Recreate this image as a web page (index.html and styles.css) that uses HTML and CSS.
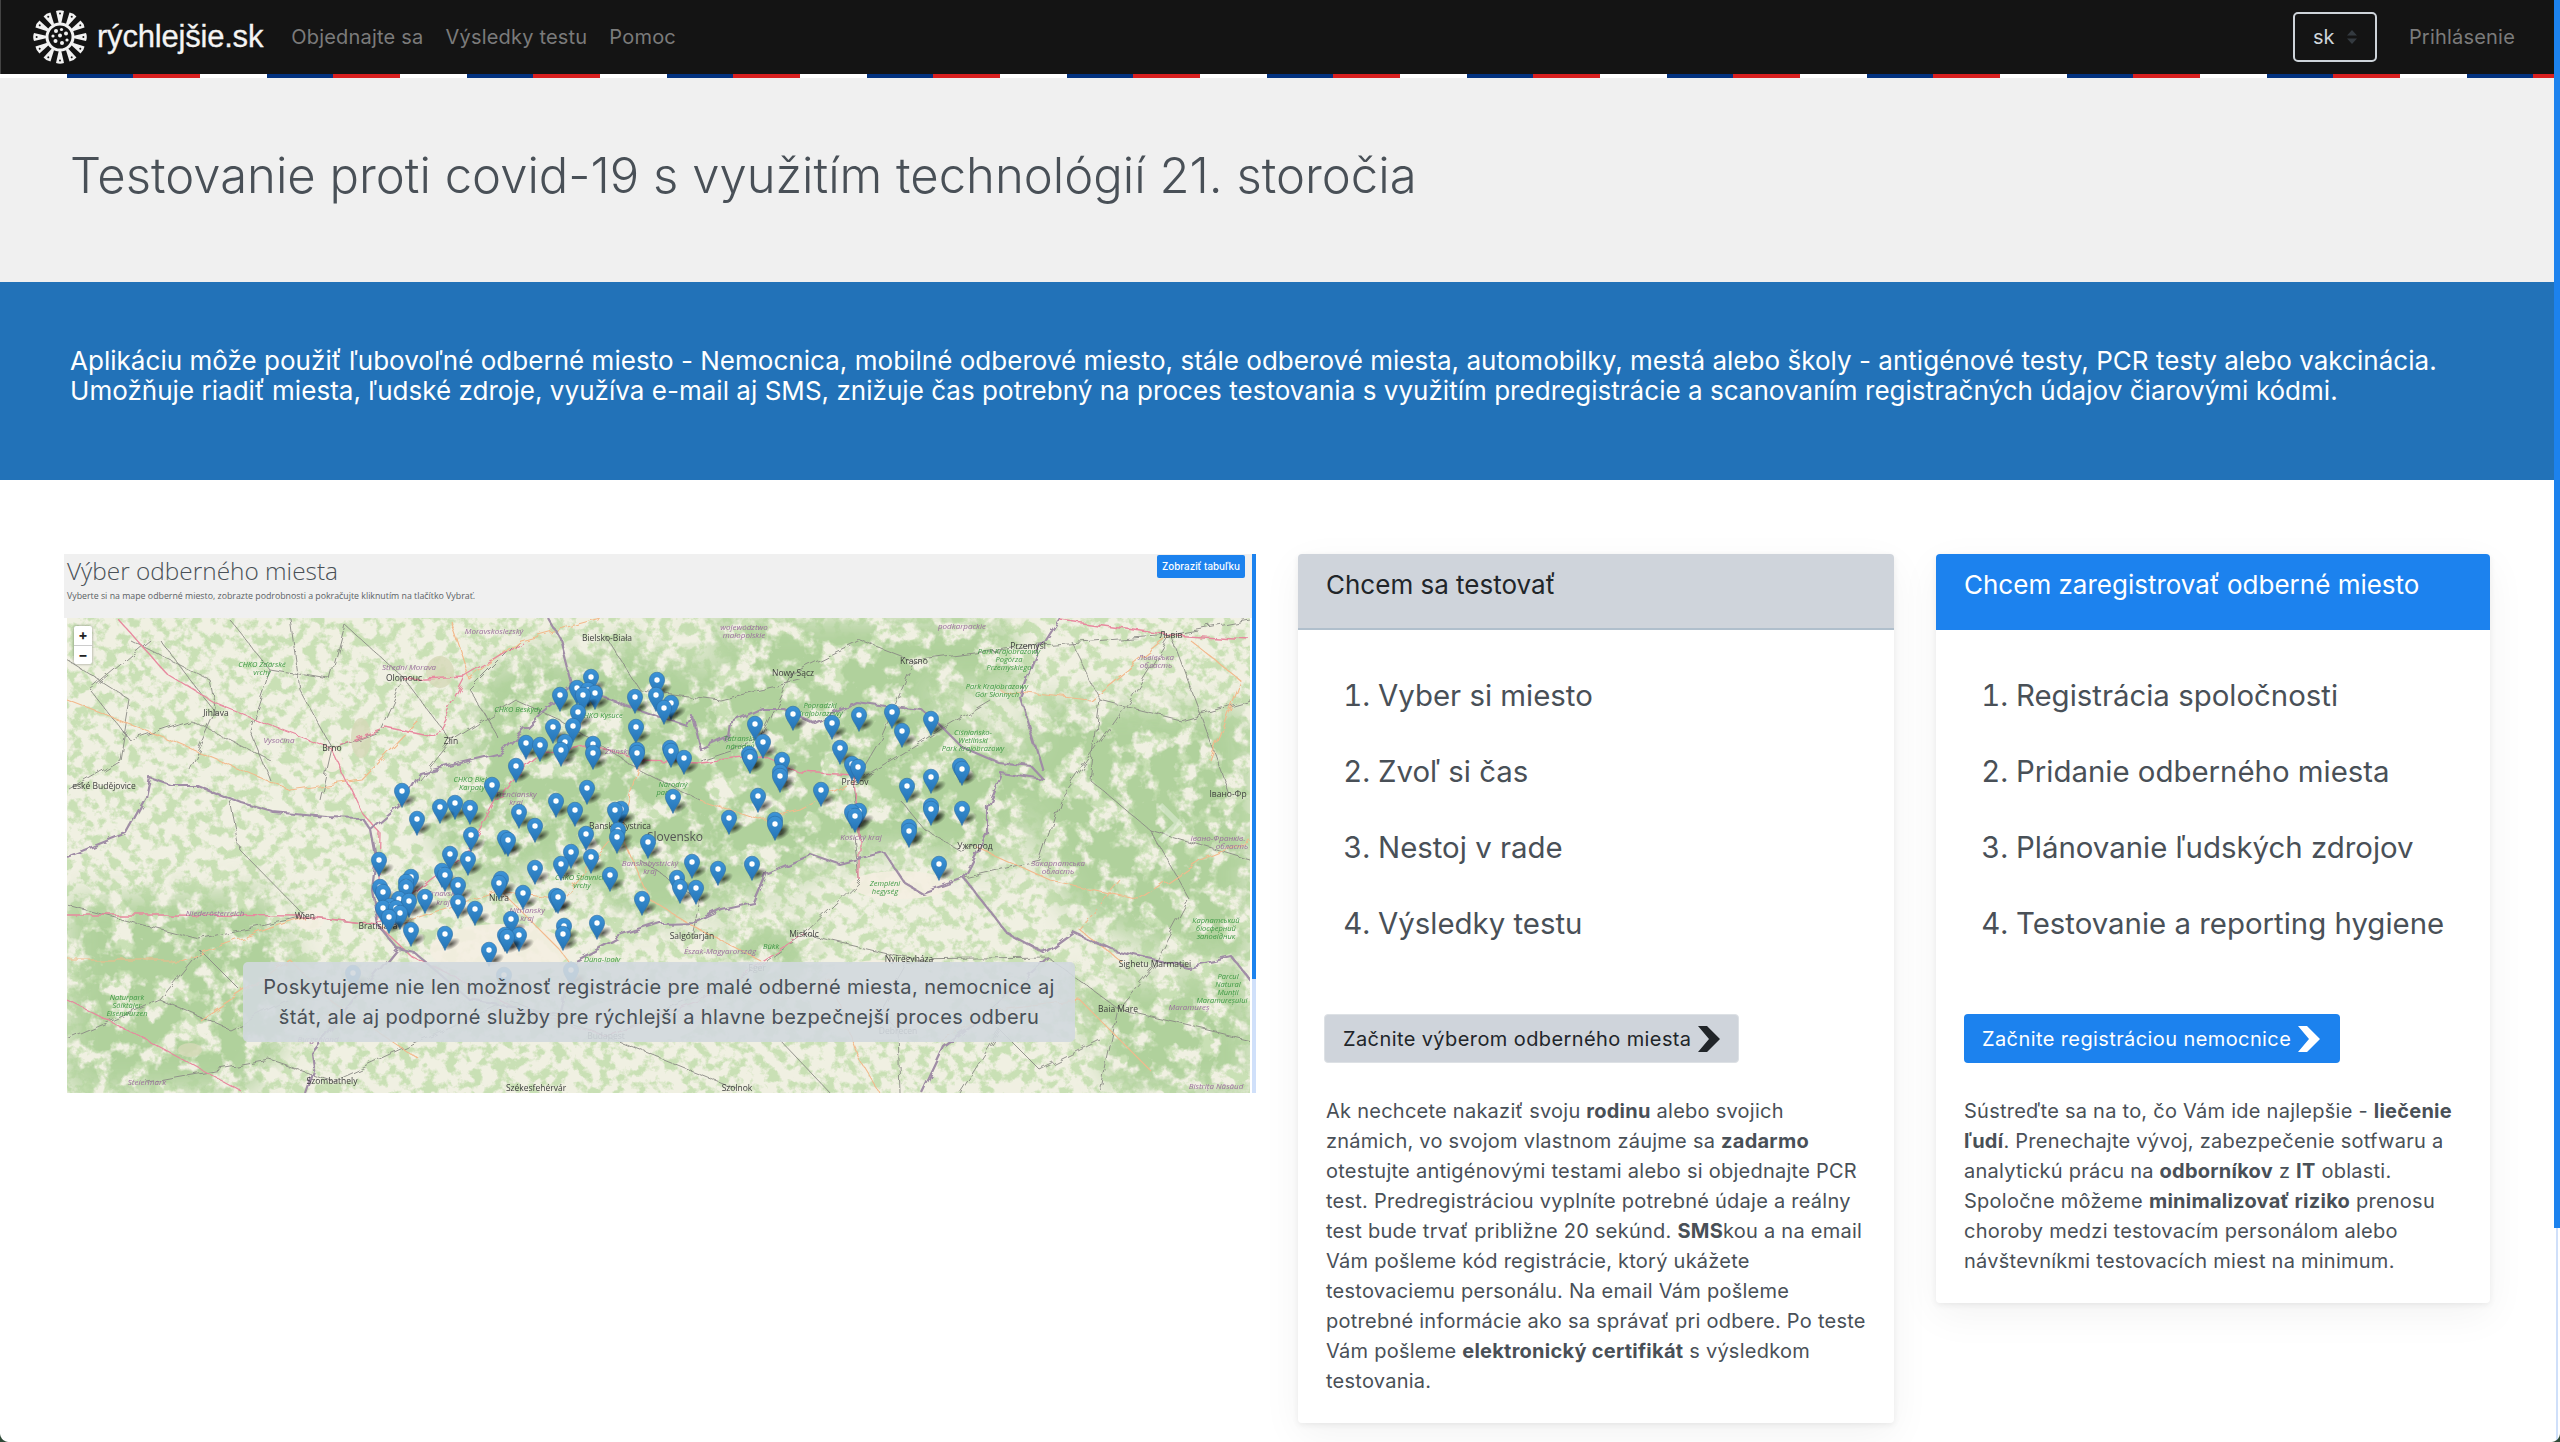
FILE: index.html
```html
<!DOCTYPE html>
<html lang="sk">
<head>
    <meta charset="UTF-8">
    <meta name="viewport" content="width=device-width, initial-scale=1.0">
    <title>rýchlejšie.sk</title>
    <link rel="stylesheet" href="styles.css">
</head>
<body>
<div class="window">
<div class="page">
    <nav class="navbar">
        <svg class="logo" viewBox="-27 -27 54 54">
            <defs>
                <g id="spike"><path d="M-1.3 -14 L1.3 -14 L4 -26 Q0 -27.6 -4 -26 Z"/><circle cy="-23.4" r="1" fill="#141414"/></g>
            </defs>
            <g fill="#f2f2f2">
                <use href="#spike"/>
                <use href="#spike" transform="rotate(30)"/>
                <use href="#spike" transform="rotate(60)"/>
                <use href="#spike" transform="rotate(90)"/>
                <use href="#spike" transform="rotate(120)"/>
                <use href="#spike" transform="rotate(150)"/>
                <use href="#spike" transform="rotate(180)"/>
                <use href="#spike" transform="rotate(210)"/>
                <use href="#spike" transform="rotate(240)"/>
                <use href="#spike" transform="rotate(270)"/>
                <use href="#spike" transform="rotate(300)"/>
                <use href="#spike" transform="rotate(330)"/>
                <circle r="13" fill="#141414" stroke="#f2f2f2" stroke-width="3"/>
                <circle cx="-4" cy="-6" r="2"/>
                <circle cx="1.5" cy="-7.5" r="1.6"/>
                <circle cx="6" cy="-3.5" r="2"/>
                <circle cx="-7" cy="-1" r="1.6"/>
                <circle cx="0" cy="-1.5" r="2"/>
                <circle cx="-4.5" cy="4" r="2"/>
                <circle cx="2" cy="6" r="2"/>
                <circle cx="7" cy="3" r="1.6"/>
            </g>
        </svg>
        <a class="brand" href="#">rýchlejšie.sk</a>
        <a class="nav-link" href="#">Objednajte sa</a>
        <a class="nav-link" href="#">Výsledky testu</a>
        <a class="nav-link" href="#">Pomoc</a>
        <div class="lang">
            <span>sk</span>
            <svg class="lang-arrows" width="10" height="14" viewBox="0 0 10 14"><path d="M5 0 L10 5.5 H0 Z M5 14 L0 8.5 H10 Z" fill="#343a40"/></svg>
        </div>
        <a class="nav-link login" href="#">Prihlásenie</a>
    </nav>
    <div class="stripe"></div>

    <header class="hero">
        <h1>Testovanie proti covid-19 s využitím technológií 21. storočia</h1>
    </header>

    <section class="band">
        <p>Aplikáciu môže použiť ľubovoľné odberné miesto - Nemocnica, mobilné odberové miesto, stále odberové miesta, automobilky, mestá alebo školy - antigénové testy, PCR testy alebo vakcinácia. Umožňuje riadiť miesta, ľudské zdroje, využíva e-mail aj SMS, znižuje čas potrebný na proces testovania s využitím predregistrácie a scanovaním registračných údajov čiarovými kódmi.</p>
    </section>

    <main class="content">
        <section class="preview">
            <div class="preview-main">
                <div class="preview-head">
                    <div>
                        <h3>Výber odberného miesta</h3>
                        <p>Vyberte si na mape odberné miesto, zobrazte podrobnosti a pokračujte kliknutím na tlačítko Vybrať.</p>
                    </div>
                    <a class="table-btn" href="#">Zobraziť tabuľku</a>
                </div>
                <div class="map">
                    <svg class="map-svg" viewBox="67 618 1183 475" preserveAspectRatio="none">
                        <defs>
                            <filter id="mottle" x="0" y="0" width="100%" height="100%" color-interpolation-filters="sRGB">
                                <feTurbulence type="fractalNoise" baseFrequency=".085" numOctaves="4" seed="7"/>
                                <feColorMatrix values="0 0 0 0 .79  0 0 0 0 .88  0 0 0 0 .71  6 0 0 0 -2.75"/>
                            </filter>
                            <filter id="forest" x="0" y="0" width="100%" height="100%" color-interpolation-filters="sRGB">
                                <feTurbulence type="fractalNoise" baseFrequency=".045" numOctaves="4" seed="12"/>
                                <feColorMatrix values="0 0 0 0 .69  0 0 0 0 .82  0 0 0 0 .61  7 0 0 0 -2.7"/>
                            </filter>
                            <filter id="wiggle" x="-5%" y="-5%" width="110%" height="110%">
                                <feTurbulence type="fractalNoise" baseFrequency=".06" numOctaves="3" seed="3"/>
                                <feDisplacementMap in="SourceGraphic" scale="9"/>
                            </filter>
                            <filter id="soft"><feGaussianBlur stdDeviation="14"/></filter>
                            <mask id="hills">
                                <g fill="#fff" filter="url(#soft)">
                                    <path d="M490 700 L620 640 L760 680 L900 680 L1050 760 L1000 870 L880 850 L770 890 L640 930 L560 860 L470 890 L430 830 Z"/>
                                    <path d="M1030 700 L1250 710 L1250 970 L1180 960 L1070 910 L1030 830 Z"/>
                                    <path d="M67 900 L270 890 L310 1000 L250 1093 L67 1093 Z"/>
                                    <path d="M690 618 L1010 618 L1020 690 L750 690 Z"/>
                                    <path d="M1060 985 L1250 975 L1250 1093 L1120 1093 Z"/>
                                    <path d="M725 925 L805 920 L815 975 L735 985 Z"/>
                                    <path d="M470 680 L560 640 L570 720 L480 760 Z"/>
                                </g>
                            </mask>
                            <radialGradient id="shade">
                                <stop offset="0" stop-color="#000" stop-opacity=".65"/>
                                <stop offset=".55" stop-color="#000" stop-opacity=".3"/>
                                <stop offset="1" stop-color="#000" stop-opacity="0"/>
                            </radialGradient>
                            <linearGradient id="pinfill" x1="0" y1="0" x2="0" y2="1">
                                <stop offset="0" stop-color="#3d94d8"/>
                                <stop offset="1" stop-color="#2473b4"/>
                            </linearGradient>
                            <g id="p">
                                <ellipse cx="6" cy="10" rx="10" ry="5" fill="url(#shade)" transform="rotate(-28 6 10)"/>
                                <path d="M0 16.5 C-1.4 11.5 -7.6 5.5 -7.6 -.2 A7.6 7.6 0 1 1 7.6 -.2 C7.6 5.5 1.4 11.5 0 16.5 Z" fill="url(#pinfill)" stroke="#2a6ba3" stroke-width=".6"/>
                                <circle r="2.7" fill="#fff"/>
                            </g>
                        </defs>

                        <rect x="67" y="618" width="1183" height="475" fill="#f0f0e2"/>
                        <rect x="67" y="618" width="1183" height="475" filter="url(#mottle)"/>
                        <g mask="url(#hills)">
                            <rect x="67" y="618" width="1183" height="475" filter="url(#forest)"/>
                        </g>

                        <g fill="#f5efe2" opacity=".9">
                            <ellipse cx="332" cy="760" rx="10" ry="12"/>
                            <ellipse cx="310" cy="920" rx="14" ry="10"/>
                            <ellipse cx="640" cy="1020" rx="60" ry="22"/>
                            <ellipse cx="900" cy="885" rx="50" ry="14"/>
                            <ellipse cx="500" cy="950" rx="70" ry="26"/>
                            <ellipse cx="880" cy="1000" rx="70" ry="40"/>
                        </g>
                        <g fill="#d6d9b8" opacity=".8">
                            <ellipse cx="361" cy="738" rx="10" ry="20"/>
                            <ellipse cx="440" cy="672" rx="14" ry="16"/>
                            <ellipse cx="190" cy="1050" rx="12" ry="7"/>
                        </g>

                        <g class="rds" filter="url(#wiggle)">
                            <g class="rd-minor">
                                <path d="M67 660 L130 700 L120 760 L70 790"/>
                                <path d="M130 640 L210 680 L216 713 L190 770"/>
                                <path d="M216 713 L160 640"/>
                                <path d="M290 618 L300 690 L332 748 L320 800"/>
                                <path d="M345 625 L404 678 L380 730 L332 748"/>
                                <path d="M404 678 L451 741 L420 780"/>
                                <path d="M451 741 L516 700 L560 720 L640 770 L700 800"/>
                                <path d="M607 638 L640 690 L720 700 L800 680"/>
                                <path d="M793 673 L860 640 L914 661 L1028 646 L1171 635 L1250 620"/>
                                <path d="M914 661 L880 740 L855 782 L860 837"/>
                                <path d="M793 673 L760 740 L700 760"/>
                                <path d="M1171 635 L1130 700 L1060 800 L1040 860 L964 878"/>
                                <path d="M1171 635 L1230 794"/>
                                <path d="M855 782 L940 730 L990 700"/>
                                <path d="M67 905 L200 940 L305 916 L378 925"/>
                                <path d="M305 916 L240 850 L230 800"/>
                                <path d="M332 1081 L420 1040 L510 1000 L606 1036"/>
                                <path d="M332 1081 L270 1060 L147 1082"/>
                                <path d="M606 1036 L737 1089"/>
                                <path d="M606 1036 L757 968 L804 934 L909 959 L1048 957 L1118 1009 L1250 1040"/>
                                <path d="M909 959 L880 1010 L898 1031 L900 1093"/>
                                <path d="M804 934 L860 880 L855 837"/>
                                <path d="M692 936 L700 900 L640 860"/>
                                <path d="M1155 964 L1118 1009 L1100 1093"/>
                                <path d="M900 800 L925 830 L960 850 L975 846"/>
                                <path d="M150 640 L90 690 L130 740 L190 720 L270 760"/>
                                <path d="M230 620 L270 670 L330 680 L345 625"/>
                                <path d="M270 670 L250 730 L270 780"/>
                                <path d="M520 640 L470 690 L500 740"/>
                                <path d="M1070 640 L1100 700 L1180 720 L1250 700"/>
                                <path d="M1100 700 L1090 780 L1150 830 L1250 860"/>
                                <path d="M1150 830 L1190 900 L1155 964"/>
                                <path d="M67 1040 L160 1000 L230 1030 L290 1000"/>
                                <path d="M160 1000 L200 950 L240 990"/>
                                <path d="M960 1093 L1000 1030 L1040 1070 L1100 1040"/>
                                <path d="M780 1040 L830 1093"/>
                            </g>
                            <g class="rd-sec">
                                <path d="M67 700 L170 740 L290 790 L362 780 L420 720"/>
                                <path d="M450 620 L470 680 L520 640 L600 618"/>
                                <path d="M640 760 L620 830 L650 900 L700 930 L760 960"/>
                                <path d="M500 890 L560 900 L620 830"/>
                                <path d="M67 960 L180 960 L305 916"/>
                                <path d="M380 930 L500 890 L560 950 L590 990"/>
                                <path d="M1000 690 L1090 700 L1171 635"/>
                                <path d="M975 846 L1050 880 L1140 900 L1200 860 L1250 840"/>
                                <path d="M200 1020 L290 960 L330 1000 L420 1060"/>
                                <path d="M940 1040 L1000 1010 L1080 1000 L1150 1070"/>
                                <path d="M780 1000 L830 980 L860 1060 L880 1093"/>
                                <path d="M855 782 L800 810 L760 820 L700 800"/>
                                <path d="M1190 640 L1240 680 L1210 760"/>
                                <path d="M1120 880 L1080 930 L1120 960"/>
                            </g>
                            <g class="rd-main">
                                <path d="M119 620 L166 673 L215 703 L264 723 L331 748 L385 727 L434 737 L465 677 L523 643"/>
                                <path d="M331 748 L362 813 L380 833 L378 925"/>
                                <path d="M378 925 L430 880 L470 850 L497 800 L516 775 L540 755 L590 745 L640 760 L700 762 L760 755 L800 772 L855 775 L860 820 L860 880"/>
                                <path d="M305 916 L378 925 L410 955 L520 1010 L606 1036"/>
                                <path d="M67 915 L160 915 L305 916"/>
                                <path d="M605 1036 L700 1000 L804 934"/>
                                <path d="M1060 620 L1171 635 L1250 640"/>
                                <path d="M405 680 L465 677"/>
                                <path d="M240 1090 L147 1040 L67 1000"/>
                            </g>
                            <g class="rd-border">
                                <path d="M67 857 L126 833 L146 797 L150 778 L170 785 L197 785 L242 803 L273 812 L327 817 L362 818 L371 830 L376 857 L372 890 L378 925 L397 948 L414 952 L470 1000 L560 1015 L575 960 L617 937 L660 923 L697 922 L722 910 L754 903 L767 873 L811 855 L840 865 L885 853 L905 883 L922 893 L964 878 L970 867 L987 833 L987 807 L1001 773 L1044 780 L1032 767 L999 763 L962 747 L938 723 L922 710 L893 707 L856 702 L815 723 L783 708 L762 708 L730 723 L728 737 L701 750 L693 717 L688 727 L648 713 L612 700 L572 687 L541 713 L501 753 L420 773 L403 803 L371 830"/>
                                <path d="M572 687 L559 637 L548 618"/>
                                <path d="M1042 770 L1020 697 L1038 653 L1060 618"/>
                                <path d="M964 878 L1007 933 L1044 953 L1073 932 L1113 950 L1187 967 L1232 957 L1250 980"/>
                                <path d="M1048 957 L980 1020 L944 1047 L922 1093"/>
                                <path d="M397 948 L312 1053 L314 1067 L305 1093"/>
                            </g>
                        </g>
                        <polyline points="1160,805 1178,823 1160,841" fill="none" stroke="#fff" stroke-opacity=".35" stroke-width="6"/>

                        <g class="lbl-place">
                            <text x="607" y="641" text-anchor="middle">Bielsko-Biała</text>
                            <text x="404" y="681" text-anchor="middle">Olomouc</text>
                            <text x="216" y="716" text-anchor="middle">Jihlava</text>
                            <text x="332" y="751" text-anchor="middle">Brno</text>
                            <text x="451" y="744" text-anchor="middle">Zlín</text>
                            <text x="104" y="789" text-anchor="middle">eské Budějovice</text>
                            <text x="305" y="919" text-anchor="middle">Wien</text>
                            <text x="378" y="929" text-anchor="middle">Bratislava</text>
                            <text x="499" y="901" text-anchor="middle">Nitra</text>
                            <text x="620" y="829" text-anchor="middle">Banská Bystrica</text>
                            <text x="914" y="664" text-anchor="middle">Krasno</text>
                            <text x="793" y="676" text-anchor="middle">Nowy Sącz</text>
                            <text x="1028" y="649" text-anchor="middle">Przemyśl</text>
                            <text x="1171" y="638" text-anchor="middle">Львів</text>
                            <text x="855" y="785" text-anchor="middle">Prešov</text>
                            <text x="975" y="849" text-anchor="middle">Ужгород</text>
                            <text x="1228" y="797" text-anchor="middle">Івано-Фр</text>
                            <text x="692" y="939" text-anchor="middle">Salgótarján</text>
                            <text x="804" y="937" text-anchor="middle">Miskolc</text>
                            <text x="909" y="962" text-anchor="middle">Nyíregyháza</text>
                            <text x="1155" y="967" text-anchor="middle">Sighetu Marmației</text>
                            <text x="1118" y="1012" text-anchor="middle">Baia Mare</text>
                            <text x="332" y="1084" text-anchor="middle">Szombathely</text>
                            <text x="536" y="1091" text-anchor="middle">Székesfehérvár</text>
                            <text x="737" y="1091" text-anchor="middle">Szolnok</text>
                            <text x="757" y="971" text-anchor="middle">Eger</text>
                            <text x="606" y="1039" text-anchor="middle">Budapest</text>
                            <text x="898" y="1034" text-anchor="middle">Debrecen</text>
                            <text x="411" y="1022" text-anchor="middle">Győr</text>
                        </g>
                        <text class="lbl-country" x="675" y="841" text-anchor="middle">Slovensko</text>
                        <g class="lbl-region">
                            <text x="494" y="634" text-anchor="middle">Moravskoslezský</text>
                            <text x="409" y="670" text-anchor="middle">Střední Morava</text>
                            <text x="279" y="743" text-anchor="middle">Vysočina</text>
                            <text x="516" y="797" text-anchor="middle">Trenčiansky</text>
                            <text x="516" y="805" text-anchor="middle">kraj</text>
                            <text x="618" y="754" text-anchor="middle">Žilinský</text>
                            <text x="650" y="866" text-anchor="middle">Banskobystrický</text>
                            <text x="650" y="874" text-anchor="middle">kraj</text>
                            <text x="443" y="896" text-anchor="middle">Trnavský</text>
                            <text x="443" y="905" text-anchor="middle">kraj</text>
                            <text x="527" y="913" text-anchor="middle">Nitriansky</text>
                            <text x="527" y="921" text-anchor="middle">kraj</text>
                            <text x="861" y="840" text-anchor="middle">Košický kraj</text>
                            <text x="962" y="629" text-anchor="middle">podkarpackie</text>
                            <text x="744" y="630" text-anchor="middle">województwo</text>
                            <text x="744" y="638" text-anchor="middle">małopolskie</text>
                            <text x="1156" y="660" text-anchor="middle">Львівська</text>
                            <text x="1156" y="668" text-anchor="middle">область</text>
                            <text x="1058" y="866" text-anchor="middle">Закарпатська</text>
                            <text x="1058" y="874" text-anchor="middle">область</text>
                            <text x="1218" y="841" text-anchor="middle">Івано-Франків.</text>
                            <text x="1232" y="849" text-anchor="middle">область</text>
                            <text x="720" y="954" text-anchor="middle">Észak-Magyarország</text>
                            <text x="215" y="916" text-anchor="middle">Niederösterreich</text>
                            <text x="147" y="1085" text-anchor="middle">Steiermark</text>
                            <text x="1189" y="1010" text-anchor="middle">Maramureș</text>
                            <text x="1216" y="1089" text-anchor="middle">Bistrița Năsăud</text>
                            <text x="318" y="1042" text-anchor="middle">Burgenland</text>
                        </g>
                        <g class="lbl-park">
                            <text x="262" y="667" text-anchor="middle">CHKO Žďárské</text>
                            <text x="262" y="675" text-anchor="middle">vrchy</text>
                            <text x="518" y="712" text-anchor="middle">CHKO Beskydy</text>
                            <text x="601" y="718" text-anchor="middle">CHKO Kysuce</text>
                            <text x="472" y="782" text-anchor="middle">CHKO Biele</text>
                            <text x="472" y="790" text-anchor="middle">Karpaty</text>
                            <text x="673" y="787" text-anchor="middle">Národný</text>
                            <text x="664" y="795" text-anchor="middle">park</text>
                            <text x="820" y="708" text-anchor="middle">Popradzki</text>
                            <text x="820" y="716" text-anchor="middle">Krajobrazowy</text>
                            <text x="740" y="741" text-anchor="middle">Tatranský</text>
                            <text x="740" y="749" text-anchor="middle">národný</text>
                            <text x="1009" y="654" text-anchor="middle">Park Krajobrazowy</text>
                            <text x="1009" y="662" text-anchor="middle">Pogórza</text>
                            <text x="1009" y="670" text-anchor="middle">Przemyskiego</text>
                            <text x="997" y="689" text-anchor="middle">Park Krajobrazowy</text>
                            <text x="997" y="697" text-anchor="middle">Gór Słonnych</text>
                            <text x="973" y="735" text-anchor="middle">Ciśniańsko-</text>
                            <text x="973" y="743" text-anchor="middle">Wetliński</text>
                            <text x="973" y="751" text-anchor="middle">Park Krajobrazowy</text>
                            <text x="885" y="886" text-anchor="middle">Zempléni</text>
                            <text x="885" y="894" text-anchor="middle">hegység</text>
                            <text x="771" y="949" text-anchor="middle">Bükk</text>
                            <text x="582" y="880" text-anchor="middle">CHKO Štiavnické</text>
                            <text x="582" y="888" text-anchor="middle">vrchy</text>
                            <text x="602" y="962" text-anchor="middle">Duna-Ipoly</text>
                            <text x="127" y="1000" text-anchor="middle">Naturpark</text>
                            <text x="127" y="1008" text-anchor="middle">Sölktäler</text>
                            <text x="127" y="1016" text-anchor="middle">Eisenwurzen</text>
                            <text x="1216" y="923" text-anchor="middle">Карпатський</text>
                            <text x="1216" y="931" text-anchor="middle">біосферний</text>
                            <text x="1216" y="939" text-anchor="middle">заповідник</text>
                            <text x="1228" y="979" text-anchor="middle">Parcul</text>
                            <text x="1228" y="987" text-anchor="middle">Natural</text>
                            <text x="1228" y="995" text-anchor="middle">Munții</text>
                            <text x="1222" y="1003" text-anchor="middle">Maramureșului</text>
                        </g>

                        <g>
                            <use href="#p" x="591" y="677"/><use href="#p" x="657" y="680"/><use href="#p" x="577" y="688"/><use href="#p" x="588" y="690"/>
                            <use href="#p" x="595" y="693"/><use href="#p" x="656" y="695"/><use href="#p" x="560" y="695"/><use href="#p" x="583" y="695"/>
                            <use href="#p" x="635" y="697"/><use href="#p" x="671" y="703"/><use href="#p" x="664" y="708"/><use href="#p" x="578" y="712"/>
                            <use href="#p" x="892" y="712"/><use href="#p" x="793" y="714"/><use href="#p" x="859" y="715"/><use href="#p" x="931" y="719"/>
                            <use href="#p" x="832" y="723"/><use href="#p" x="755" y="724"/><use href="#p" x="573" y="726"/><use href="#p" x="553" y="727"/>
                            <use href="#p" x="636" y="727"/><use href="#p" x="902" y="731"/><use href="#p" x="763" y="742"/><use href="#p" x="565" y="742"/>
                            <use href="#p" x="526" y="743"/><use href="#p" x="593" y="744"/><use href="#p" x="540" y="745"/><use href="#p" x="840" y="748"/>
                            <use href="#p" x="670" y="748"/><use href="#p" x="637" y="750"/><use href="#p" x="561" y="750"/><use href="#p" x="671" y="751"/>
                            <use href="#p" x="593" y="753"/><use href="#p" x="637" y="753"/><use href="#p" x="749" y="754"/><use href="#p" x="750" y="757"/>
                            <use href="#p" x="684" y="758"/><use href="#p" x="782" y="760"/><use href="#p" x="852" y="764"/><use href="#p" x="516" y="766"/>
                            <use href="#p" x="960" y="766"/><use href="#p" x="858" y="767"/><use href="#p" x="962" y="769"/><use href="#p" x="780" y="772"/>
                            <use href="#p" x="780" y="776"/><use href="#p" x="931" y="777"/><use href="#p" x="492" y="785"/><use href="#p" x="907" y="786"/>
                            <use href="#p" x="587" y="788"/><use href="#p" x="821" y="790"/><use href="#p" x="402" y="791"/><use href="#p" x="758" y="796"/>
                            <use href="#p" x="673" y="797"/><use href="#p" x="556" y="801"/><use href="#p" x="455" y="803"/><use href="#p" x="931" y="806"/>
                            <use href="#p" x="440" y="807"/><use href="#p" x="470" y="808"/><use href="#p" x="931" y="809"/><use href="#p" x="621" y="809"/>
                            <use href="#p" x="962" y="809"/><use href="#p" x="615" y="810"/><use href="#p" x="575" y="810"/><use href="#p" x="859" y="811"/>
                            <use href="#p" x="519" y="812"/><use href="#p" x="852" y="812"/><use href="#p" x="855" y="816"/><use href="#p" x="729" y="818"/>
                            <use href="#p" x="417" y="819"/><use href="#p" x="775" y="820"/><use href="#p" x="775" y="824"/><use href="#p" x="535" y="826"/>
                            <use href="#p" x="909" y="827"/><use href="#p" x="618" y="830"/><use href="#p" x="909" y="831"/><use href="#p" x="586" y="834"/>
                            <use href="#p" x="471" y="835"/><use href="#p" x="617" y="837"/><use href="#p" x="505" y="838"/><use href="#p" x="508" y="840"/>
                            <use href="#p" x="648" y="842"/><use href="#p" x="571" y="852"/><use href="#p" x="450" y="854"/><use href="#p" x="591" y="857"/>
                            <use href="#p" x="468" y="859"/><use href="#p" x="379" y="860"/><use href="#p" x="692" y="862"/><use href="#p" x="752" y="864"/>
                            <use href="#p" x="561" y="864"/><use href="#p" x="939" y="864"/><use href="#p" x="535" y="868"/><use href="#p" x="718" y="869"/>
                            <use href="#p" x="442" y="871"/><use href="#p" x="610" y="875"/><use href="#p" x="445" y="875"/><use href="#p" x="411" y="877"/>
                            <use href="#p" x="677" y="878"/><use href="#p" x="501" y="879"/><use href="#p" x="406" y="882"/><use href="#p" x="499" y="883"/>
                            <use href="#p" x="458" y="885"/><use href="#p" x="680" y="887"/><use href="#p" x="406" y="887"/><use href="#p" x="380" y="887"/>
                            <use href="#p" x="696" y="888"/><use href="#p" x="383" y="892"/><use href="#p" x="523" y="893"/><use href="#p" x="556" y="896"/>
                            <use href="#p" x="425" y="897"/><use href="#p" x="558" y="897"/><use href="#p" x="399" y="899"/><use href="#p" x="642" y="899"/>
                            <use href="#p" x="409" y="901"/><use href="#p" x="458" y="902"/><use href="#p" x="390" y="906"/><use href="#p" x="383" y="908"/>
                            <use href="#p" x="396" y="908"/><use href="#p" x="475" y="909"/><use href="#p" x="400" y="913"/><use href="#p" x="389" y="917"/>
                            <use href="#p" x="511" y="919"/><use href="#p" x="597" y="923"/><use href="#p" x="564" y="926"/><use href="#p" x="411" y="930"/>
                            <use href="#p" x="445" y="934"/><use href="#p" x="563" y="934"/><use href="#p" x="519" y="935"/><use href="#p" x="505" y="935"/>
                            <use href="#p" x="507" y="937"/><use href="#p" x="489" y="950"/><use href="#p" x="571" y="970"/><use href="#p" x="353" y="973"/>
                            <use href="#p" x="504" y="975"/>
                        </g>
                    </svg>
                    <div class="zoom-ctl">
                        <span>+</span>
                        <span>−</span>
                    </div>
                    <div class="map-note">Poskytujeme nie len možnosť registrácie pre malé odberné miesta, nemocnice aj štát, ale aj podporné služby pre rýchlejší a hlavne bezpečnejší proces odberu</div>
                </div>
            </div>
            <div class="inner-scroll"><div class="inner-thumb"></div></div>
        </section>

        <section class="card">
            <div class="card-head gray">Chcem sa testovať</div>
            <div class="card-body">
                <ol>
                    <li>Vyber si miesto</li>
                    <li>Zvoľ si čas</li>
                    <li>Nestoj v rade</li>
                    <li>Výsledky testu</li>
                </ol>
                <a class="btn gray" href="#">Začnite výberom odberného miesta
                    <svg class="chev" viewBox="0 0 22 26"><path d="M0 0 H9 L22 13 L9 26 H0 L11 13 Z"/></svg>
                </a>
                <p>Ak nechcete nakaziť svoju <b>rodinu</b> alebo svojich známich, vo svojom vlastnom záujme sa <b>zadarmo</b> otestujte antigénovými testami alebo si objednajte PCR test. Predregistráciou vyplníte potrebné údaje a reálny test bude trvať približne 20 sekúnd. <b>SMS</b>kou a na email Vám pošleme kód registrácie, ktorý ukážete testovaciemu personálu. Na email Vám pošleme potrebné informácie ako sa správať pri odbere. Po teste Vám pošleme <b>elektronický certifikát</b> s výsledkom testovania.</p>
            </div>
        </section>

        <section class="card">
            <div class="card-head blue">Chcem zaregistrovať odberné miesto</div>
            <div class="card-body">
                <ol>
                    <li>Registrácia spoločnosti</li>
                    <li>Pridanie odberného miesta</li>
                    <li>Plánovanie ľudských zdrojov</li>
                    <li>Testovanie a reporting hygiene</li>
                </ol>
                <a class="btn blue" href="#">Začnite registráciou nemocnice
                    <svg class="chev" viewBox="0 0 22 26"><path d="M0 0 H9 L22 13 L9 26 H0 L11 13 Z"/></svg>
                </a>
                <p>Sústreďte sa na to, čo Vám ide najlepšie - <b>liečenie ľudí</b>. Prenechajte vývoj, zabezpečenie sotfwaru a analytickú prácu na <b>odborníkov</b> z <b>IT</b> oblasti. Spoločne môžeme <b>minimalizovať riziko</b> prenosu choroby medzi testovacím personálom alebo návštevníkmi testovacích miest na minimum.</p>
            </div>
        </section>
    </main>
</div>
<div class="scrollbar"><div class="scroll-thumb"></div></div>
</div>
</body>
</html>
```

FILE: styles.css
```css
html, body {
    margin: 0;
    height: 100%;
    overflow: hidden;
    background: #fff;
    font-family: Inter, "Noto Sans", sans-serif;
    color: #495057;
}
.window {
    position: relative;
    display: flex;
    height: 1442px;
}
/* the desktop showing through the rounded window corners */
.window::before,
.window::after {
    content: "";
    position: absolute;
    bottom: 0;
    width: 9px;
    height: 9px;
}
.window::before {
    left: 0;
    background: radial-gradient(circle at top right, transparent 8.5px, #2f4a38 9.5px);
}
.window::after {
    right: 0;
    background: radial-gradient(circle at top left, transparent 8.5px, #2f4a38 9.5px);
}
.page {
    flex: 1;
    min-width: 0;
    overflow: hidden;
}
.scrollbar {
    width: 6px;
    background: linear-gradient(to right, #fff 33%, #d0e0fa 33%, #d0e0fa 70%, #fff 70%);
}
.scroll-thumb {
    height: 1228px;
    background: #1c82ee;
}

/* top bar */
.navbar {
    height: 74px;
    background: #141414;
    display: flex;
    align-items: center;
    padding: 0 39px 0 32px;
    border-left: 1px solid #444;
    box-sizing: border-box;
}
.logo {
    width: 54px;
    height: 54px;
    margin-right: 10px;
}
.brand {
    font-family: "Liberation Sans", Arial, sans-serif;
    font-size: 31px;
    letter-spacing: -0.2px;
    color: #f4f4f4;
    text-decoration: none;
    margin-right: 28px;
    -webkit-text-stroke: 0.3px #f4f4f4;
}
.nav-link {
    font-size: 20px;
    letter-spacing: 0.2px;
    color: #7b7b7b;
    text-decoration: none;
    margin-right: 22px;
}
.nav-link.login {
    margin-right: 0;
}
.lang {
    margin-left: auto;
    margin-right: 32px;
    width: 84px;
    height: 50px;
    box-sizing: border-box;
    border: 2px solid #ced4da;
    border-radius: 5px;
    display: flex;
    align-items: center;
    justify-content: space-between;
    padding: 0 18px;
    font-size: 20px;
    color: #ced4da;
}
.stripe {
    height: 4px;
    background: repeating-linear-gradient(to right, #fff 0, #fff 66.67px, #03327f 66.67px, #03327f 133.33px, #d91f1f 133.33px, #d91f1f 200px);
}

/* heading */
.hero {
    height: 204px;
    box-sizing: border-box;
    background: #f0f0f0;
    display: flex;
    align-items: center;
    padding: 0 0 9px 70px;
}
.hero h1 {
    margin: 0;
    font-size: 49px;
    font-weight: 350;
    color: #495057;
}
.band {
    height: 198px;
    box-sizing: border-box;
    background: #2272b8;
    color: #fff;
    padding: 64px 70px 0;
}
.band p {
    margin: 0;
    font-size: 26px;
    line-height: 30px;
    letter-spacing: 0.03px;
}

/* columns */
.content {
    display: grid;
    grid-template-columns: 1192px 596px 554px;
    column-gap: 42px;
    align-items: start;
    padding: 74px 0 0 64px;
}
.preview {
    display: flex;
    height: 539px;
}
.preview-main {
    flex: 1;
    min-width: 0;
}
.inner-scroll {
    width: 4px;
    background: #d0e0fa;
}
.inner-thumb {
    height: 425px;
    background: #1c82ee;
}
.preview-head {
    height: 64px;
    background: #f0f0f0;
    padding-left: 3px;
    display: flex;
    justify-content: space-between;
    align-items: flex-start;
}
.preview-head h3 {
    margin: 1px 0 0;
    font-family: "Open Sans", sans-serif;
    font-weight: 300;
    font-size: 24.4px;
    line-height: 32px;
    color: #495057;
}
.preview-head p {
    margin: 3px 0 0;
    font-family: "Open Sans", sans-serif;
    font-size: 8.8px;
    color: #5a5f64;
}
.table-btn {
    margin: 1px 7px 0 0;
    width: 88px;
    height: 23px;
    border-radius: 2px;
    background: #1c82ee;
    color: #fff;
    font-size: 9.8px;
    font-weight: 500;
    line-height: 23px;
    text-align: center;
    text-decoration: none;
}
.map {
    position: relative;
    margin: 0 2px 0 3px;
    height: 475px;
    overflow: hidden;
}
.map-svg {
    display: block;
    width: 100%;
    height: 100%;
    filter: blur(0.4px);
}
.rds path {
    fill: none;
    stroke-linejoin: round;
}
.rd-minor path {
    stroke: #8a8a84;
    stroke-width: 0.9;
}
.rd-sec path {
    stroke: #f3b98c;
    stroke-width: 1.1;
}
.rd-main path {
    stroke: #e8899f;
    stroke-width: 1.3;
}
.rd-border path {
    stroke: #a08da6;
    stroke-width: 2.2;
}
.map-svg text {
    font-family: "Open Sans", sans-serif;
}
.lbl-place text {
    font-size: 8.5px;
    fill: #3d3d3d;
}
.lbl-region text {
    font-size: 8px;
    font-style: italic;
    fill: #9b6f9e;
}
.lbl-park text {
    font-size: 7.5px;
    font-style: italic;
    fill: #3f9a45;
}
.lbl-country {
    font-size: 12px;
    fill: #555;
}
.zoom-ctl {
    position: absolute;
    left: 7px;
    top: 8px;
    width: 18px;
    background: #fff;
    border-radius: 2px;
    box-shadow: 0 0 3px rgba(0, 0, 0, 0.4);
}
.zoom-ctl span {
    display: block;
    height: 18.5px;
    line-height: 18px;
    text-align: center;
    font-size: 14px;
    font-weight: 700;
    color: #222;
}
.zoom-ctl span + span {
    border-top: 1px solid #ccc;
}
.map-note {
    position: absolute;
    left: 176px;
    top: 344px;
    width: 832px;
    height: 80px;
    box-sizing: border-box;
    padding: 10px 20px;
    border-radius: 5px;
    background: rgba(210, 216, 222, 0.9);
    font-size: 20px;
    line-height: 30px;
    letter-spacing: 0.4px;
    text-align: center;
    color: #495057;
}

/* cards */
.card {
    background: #fff;
    border-radius: 4px;
    box-shadow: 0 2px 6px rgba(0, 0, 0, 0.07), 0 12px 40px rgba(0, 0, 0, 0.05);
}
.card-head {
    height: 76px;
    box-sizing: border-box;
    padding: 14px 28px 0;
    font-size: 26px;
    line-height: 34px;
    border-radius: 4px 4px 0 0;
}
.card-head.gray {
    background: #cfd4db;
    color: #212529;
    border-bottom: 2px solid #b0bfcc;
}
.card-head.blue {
    background: #1c82ee;
    color: #fff;
}
.card-body {
    padding: 41px 28px 27px;
}
.card-body ol {
    margin: 0 0 39px;
    padding: 0 0 0 52px;
    font-size: 29.4px;
}
.card-body li {
    height: 76px;
    line-height: 50px;
}
.btn {
    display: inline-flex;
    align-items: center;
    gap: 6px;
    height: 49px;
    box-sizing: border-box;
    padding: 0 18px;
    border-radius: 4px;
    font-size: 20px;
    letter-spacing: 0.4px;
    text-decoration: none;
}
.btn.gray {
    margin-left: -2px;
    background: #cfd4db;
    border: 1px solid #dde1e5;
    color: #212529;
}
.btn.blue {
    background: #1c82ee;
    color: #fff;
    gap: 7px;
    padding-right: 20px;
}
.chev {
    width: 22px;
    height: 26px;
    fill: currentColor;
}
.card-body p {
    margin: 33px 0 0;
    font-size: 20px;
    line-height: 30px;
    letter-spacing: 0.25px;
}
.card-body b {
    font-weight: 700;
}
```
